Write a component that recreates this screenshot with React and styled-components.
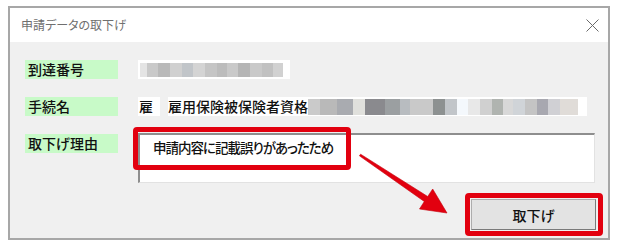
import React from "react";
import styled, { createGlobalStyle } from "styled-components";

const Global = createGlobalStyle`
  html, body { margin: 0; padding: 0; background: #ffffff; }
  body { font-family: "Noto Sans CJK JP", "Noto Sans", sans-serif; }
  * { box-sizing: border-box; }
`;

const Page = styled.div`
  position: relative;
  width: 617px;
  height: 245px;
  padding: 6px 0 0 8px;
  font-family: "Noto Sans CJK JP", "Noto Sans", sans-serif;
  font-feature-settings: "palt";
`;

const Window = styled.div`
  width: 602px;
  height: 234px;
  border: 2px solid #a7a7a7;
  display: flex;
  flex-direction: column;
  background: #f0f0f0;
`;

const TitleBar = styled.div`
  height: 34px;
  background: #ffffff;
  display: flex;
  align-items: center;
  justify-content: space-between;
  padding: 0 9px 0 11px;
`;

const Title = styled.span`
  font-size: 12px;
  color: #6f6f6f;
  line-height: 1;
`;

const Body = styled.div`
  flex: 1;
  display: flex;
  flex-direction: column;
  padding: 18px 12px 0 15px;
`;

const Row = styled.div`
  display: grid;
  grid-template-columns: 93px 1fr;
  column-gap: 20px;
  align-items: start;
  margin-bottom: ${(p) => p.$gap}px;
`;

const Label = styled.div`
  height: 19px;
  background: #c8fac8;
  font-size: 14px;
  font-weight: 500;
  line-height: 19px;
  padding-left: 3px;
  color: #111;
`;

const ValueLine = styled.div`
  display: flex;
  gap: 8px;
  height: 19px;
`;

const ValueBox = styled.div`
  height: 19px;
  background: #ffffff;
  width: ${(p) => p.$w}px;
  display: flex;
  align-items: center;
  padding-left: ${(p) => p.$pl || 0}px;
  font-size: 14px;
  font-weight: 500;
  color: #111;
  line-height: 19px;
`;

const Mosaic = styled.div`
  display: flex;
  height: ${(p) => p.$h}px;
  margin-left: ${(p) => p.$ml || 0}px;
`;

const Cell = styled.div`
  width: ${(p) => p.$w}px;
  height: 100%;
  background: ${(p) => p.$c};
`;

const FieldWrap = styled.div`
  position: relative;
  margin-top: -1px;
`;

const Field = styled.div`
  width: 457px;
  height: 50px;
  background: #ffffff;
  border-top: 2px solid #8e8e8e;
  border-left: 2px solid #8e8e8e;
  border-right: 1px solid #e2e2e2;
  border-bottom: 1px solid #e2e2e2;
  padding: 3px 0 0 13px;
  font-size: 13.5px;
  font-weight: 500;
  letter-spacing: -1px;
  line-height: 18px;
  color: #111;
`;

const Highlight = styled.div`
  position: absolute;
  border: 5px solid #e2000f;
  border-radius: 4px;
  pointer-events: none;
  left: ${(p) => p.$l}px;
  top: ${(p) => p.$t}px;
  width: ${(p) => p.$w}px;
  height: ${(p) => p.$h}px;
`;

const Footer = styled.div`
  display: flex;
  justify-content: flex-end;
  margin-top: 16px;
`;

const ButtonWrap = styled.div`
  position: relative;
`;

const Button = styled.button`
  width: 125px;
  height: 31px;
  background: #e3e3e3;
  border: 1px solid #adadad;
  border-right-color: #7a7a7a;
  border-bottom-color: #7a7a7a;
  font-family: "Noto Sans CJK JP", sans-serif;
  font-feature-settings: "palt";
  font-size: 14px;
  font-weight: 500;
  color: #111;
  padding: 0;
`;

const Overlay = styled.svg`
  position: absolute;
  left: 0;
  top: 0;
  pointer-events: none;
`;

const row1 = [
  [7, "#e4e4e4"], [11, "#c9c9c9"], [12, "#b9b9b9"], [12, "#d0d0d0"], [11, "#c1c5c9"],
  [12, "#d4d4d4"], [12, "#c5c5c5"], [10, "#bcbcbc"], [11, "#c9c9c9"], [12, "#b5b5b5"],
  [12, "#c9c9c9"], [11, "#c1c1c1"], [10, "#d1d1d1"],
];

const row2 = [
  [12, "#cacaca"], [17, "#b9b9b9"], [16, "#a9abb0"], [12, "#e0e0dc"], [20, "#8a8a8e"],
  [15, "#9b9fa1"], [10, "#b8bcc0"], [23, "#c9c9c9"], [12, "#8d9191"], [12, "#c1c5c9"],
  [11, "#f4f8fc"], [12, "#e8e8e8"], [12, "#d0d0d0"], [11, "#b0b4b0"], [10, "#d8d8d8"],
  [12, "#d0d4d8"], [12, "#c4c4c4"], [11, "#a8a8b0"], [12, "#d0d0d4"], [18, "#e0dcd8"],
];

export default function App() {
  return (
    <Page>
      <Global />
      <Window>
        <TitleBar>
          <Title>申請データの取下げ</Title>
          <svg width="13" height="13" viewBox="0 0 13 13">
            <path d="M0.5 0.5 L12.5 12.5 M12.5 0.5 L0.5 12.5" stroke="#6a6a6a" strokeWidth="1" fill="none" />
          </svg>
        </TitleBar>
        <Body>
          <Row $gap={18}>
            <Label>到達番号</Label>
            <ValueLine>
              <ValueBox $w={152}>
                <Mosaic $h={14} $ml={2}>
                  {row1.map(([w, c], i) => (
                    <Cell key={i} $w={w} $c={c} />
                  ))}
                </Mosaic>
              </ValueBox>
            </ValueLine>
          </Row>
          <Row $gap={18}>
            <Label>手続名</Label>
            <ValueLine>
              <ValueBox $w={22} $pl={1}>雇</ValueBox>
              <ValueBox $w={419}>
                雇用保険被保険者資格
                <Mosaic $h={16}>
                  {row2.map(([w, c], i) => (
                    <Cell key={i} $w={w} $c={c} />
                  ))}
                </Mosaic>
              </ValueBox>
            </ValueLine>
          </Row>
          <Row $gap={0}>
            <Label>取下げ理由</Label>
            <FieldWrap>
              <Field>申請内容に記載誤りがあったため</Field>
              <Highlight $l={-5} $t={-6} $w={218} $h={43} />
            </FieldWrap>
          </Row>
          <Footer>
            <ButtonWrap>
              <Button>取下げ</Button>
              <Highlight $l={-6} $t={-6} $w={138} $h={43} />
            </ButtonWrap>
          </Footer>
        </Body>
      </Window>
      <Overlay width="617" height="245" viewBox="0 0 617 245">
        <polygon
          points="360.6,154.2 427.7,196.5 432.7,189 447,213 419.5,209 424.3,201.5 359.4,155.8"
          fill="#e2000f"
          stroke="#c4000c"
          strokeWidth="0.6"
          strokeLinejoin="round"
        />
      </Overlay>
    </Page>
  );
}
